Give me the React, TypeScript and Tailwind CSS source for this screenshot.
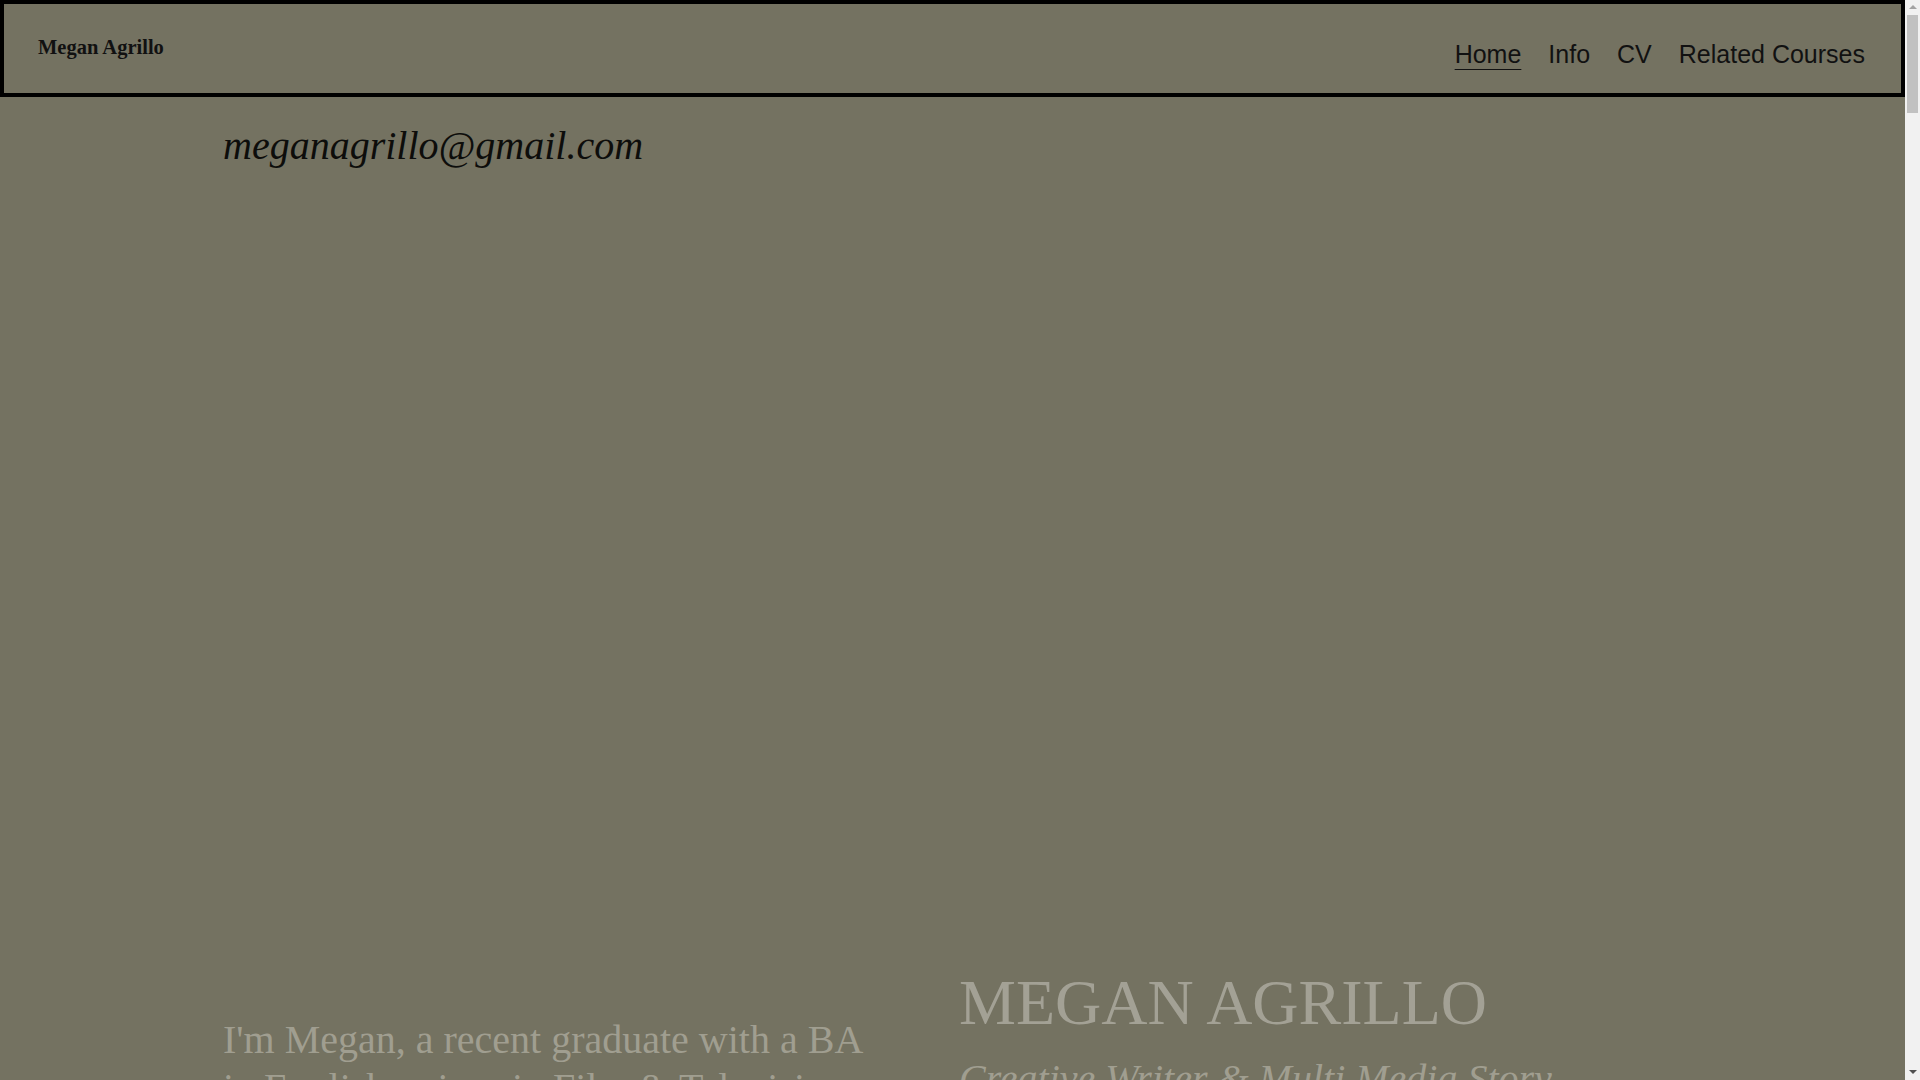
import React from "react";

export default function App() {
  const serif = { fontFamily: '"Liberation Serif", "Times New Roman", serif' };
  const sans = { fontFamily: '"Liberation Sans", Arial, sans-serif' };
  return (
    <div className="min-h-[11570px] w-[1905px] bg-[#747261]">
      <header className="box-border flex h-[97px] w-full items-start justify-between border-4 border-black">
        <div
          className="ml-[34px] mt-[33px] text-[20.5px] font-bold leading-none text-[#111111]"
          style={serif}
        >
          Megan Agrillo
        </div>
        <nav
          className="mr-[36px] mt-[38px] flex gap-[27px] text-[25px] leading-none text-[#111111]"
          style={sans}
        >
          <a className="underline decoration-1 underline-offset-[6px]" href="#">
            Home
          </a>
          <a href="#">Info</a>
          <a href="#">CV</a>
          <a href="#">Related Courses</a>
        </nav>
      </header>

      <main className="mx-[223px]">
        <div
          className="mt-[25px] text-[40px] italic leading-[48px] text-[#0d0d0b]"
          style={serif}
        >
          meganagrillo@gmail.com
        </div>

        <div className="h-[794px]" />

        <section className="grid grid-cols-[656px_656px] gap-x-[80px]">
          <div className="pt-[52px]">
            <p className="text-[40px] leading-[48px] text-[#a09e90]" style={serif}>
              I'm Megan, a recent graduate with a BA in English, minor in Film &amp; Television,
              who loves telling stories across every medium: the page, the screen and
              everything in between.
            </p>
          </div>
          <div>
            <h1 className="text-[64px] leading-[77px] text-[#a3a195]" style={serif}>
              MEGAN AGRILLO
            </h1>
            <p
              className="mt-[14px] text-[40px] italic leading-[48px] text-[#a09e90]"
              style={serif}
            >
              Creative Writer &amp; Multi Media Story teller
            </p>
          </div>
        </section>
      </main>

      {/* window scrollbar */}
      <div className="fixed right-0 top-0 flex h-[1080px] w-[15px] flex-col items-center bg-[#f1f1f1]">
        <div className="mt-[5px] h-0 w-0 border-x-[4px] border-b-[4px] border-x-transparent border-b-[#a3a3a3]" />
        <div className="mt-[6px] h-[98px] w-[11px] bg-[#c1c1c1]" />
        <div className="flex-1" />
        <div className="mb-[6px] h-0 w-0 border-x-[4px] border-t-[4px] border-x-transparent border-t-[#505050]" />
      </div>
    </div>
  );
}
